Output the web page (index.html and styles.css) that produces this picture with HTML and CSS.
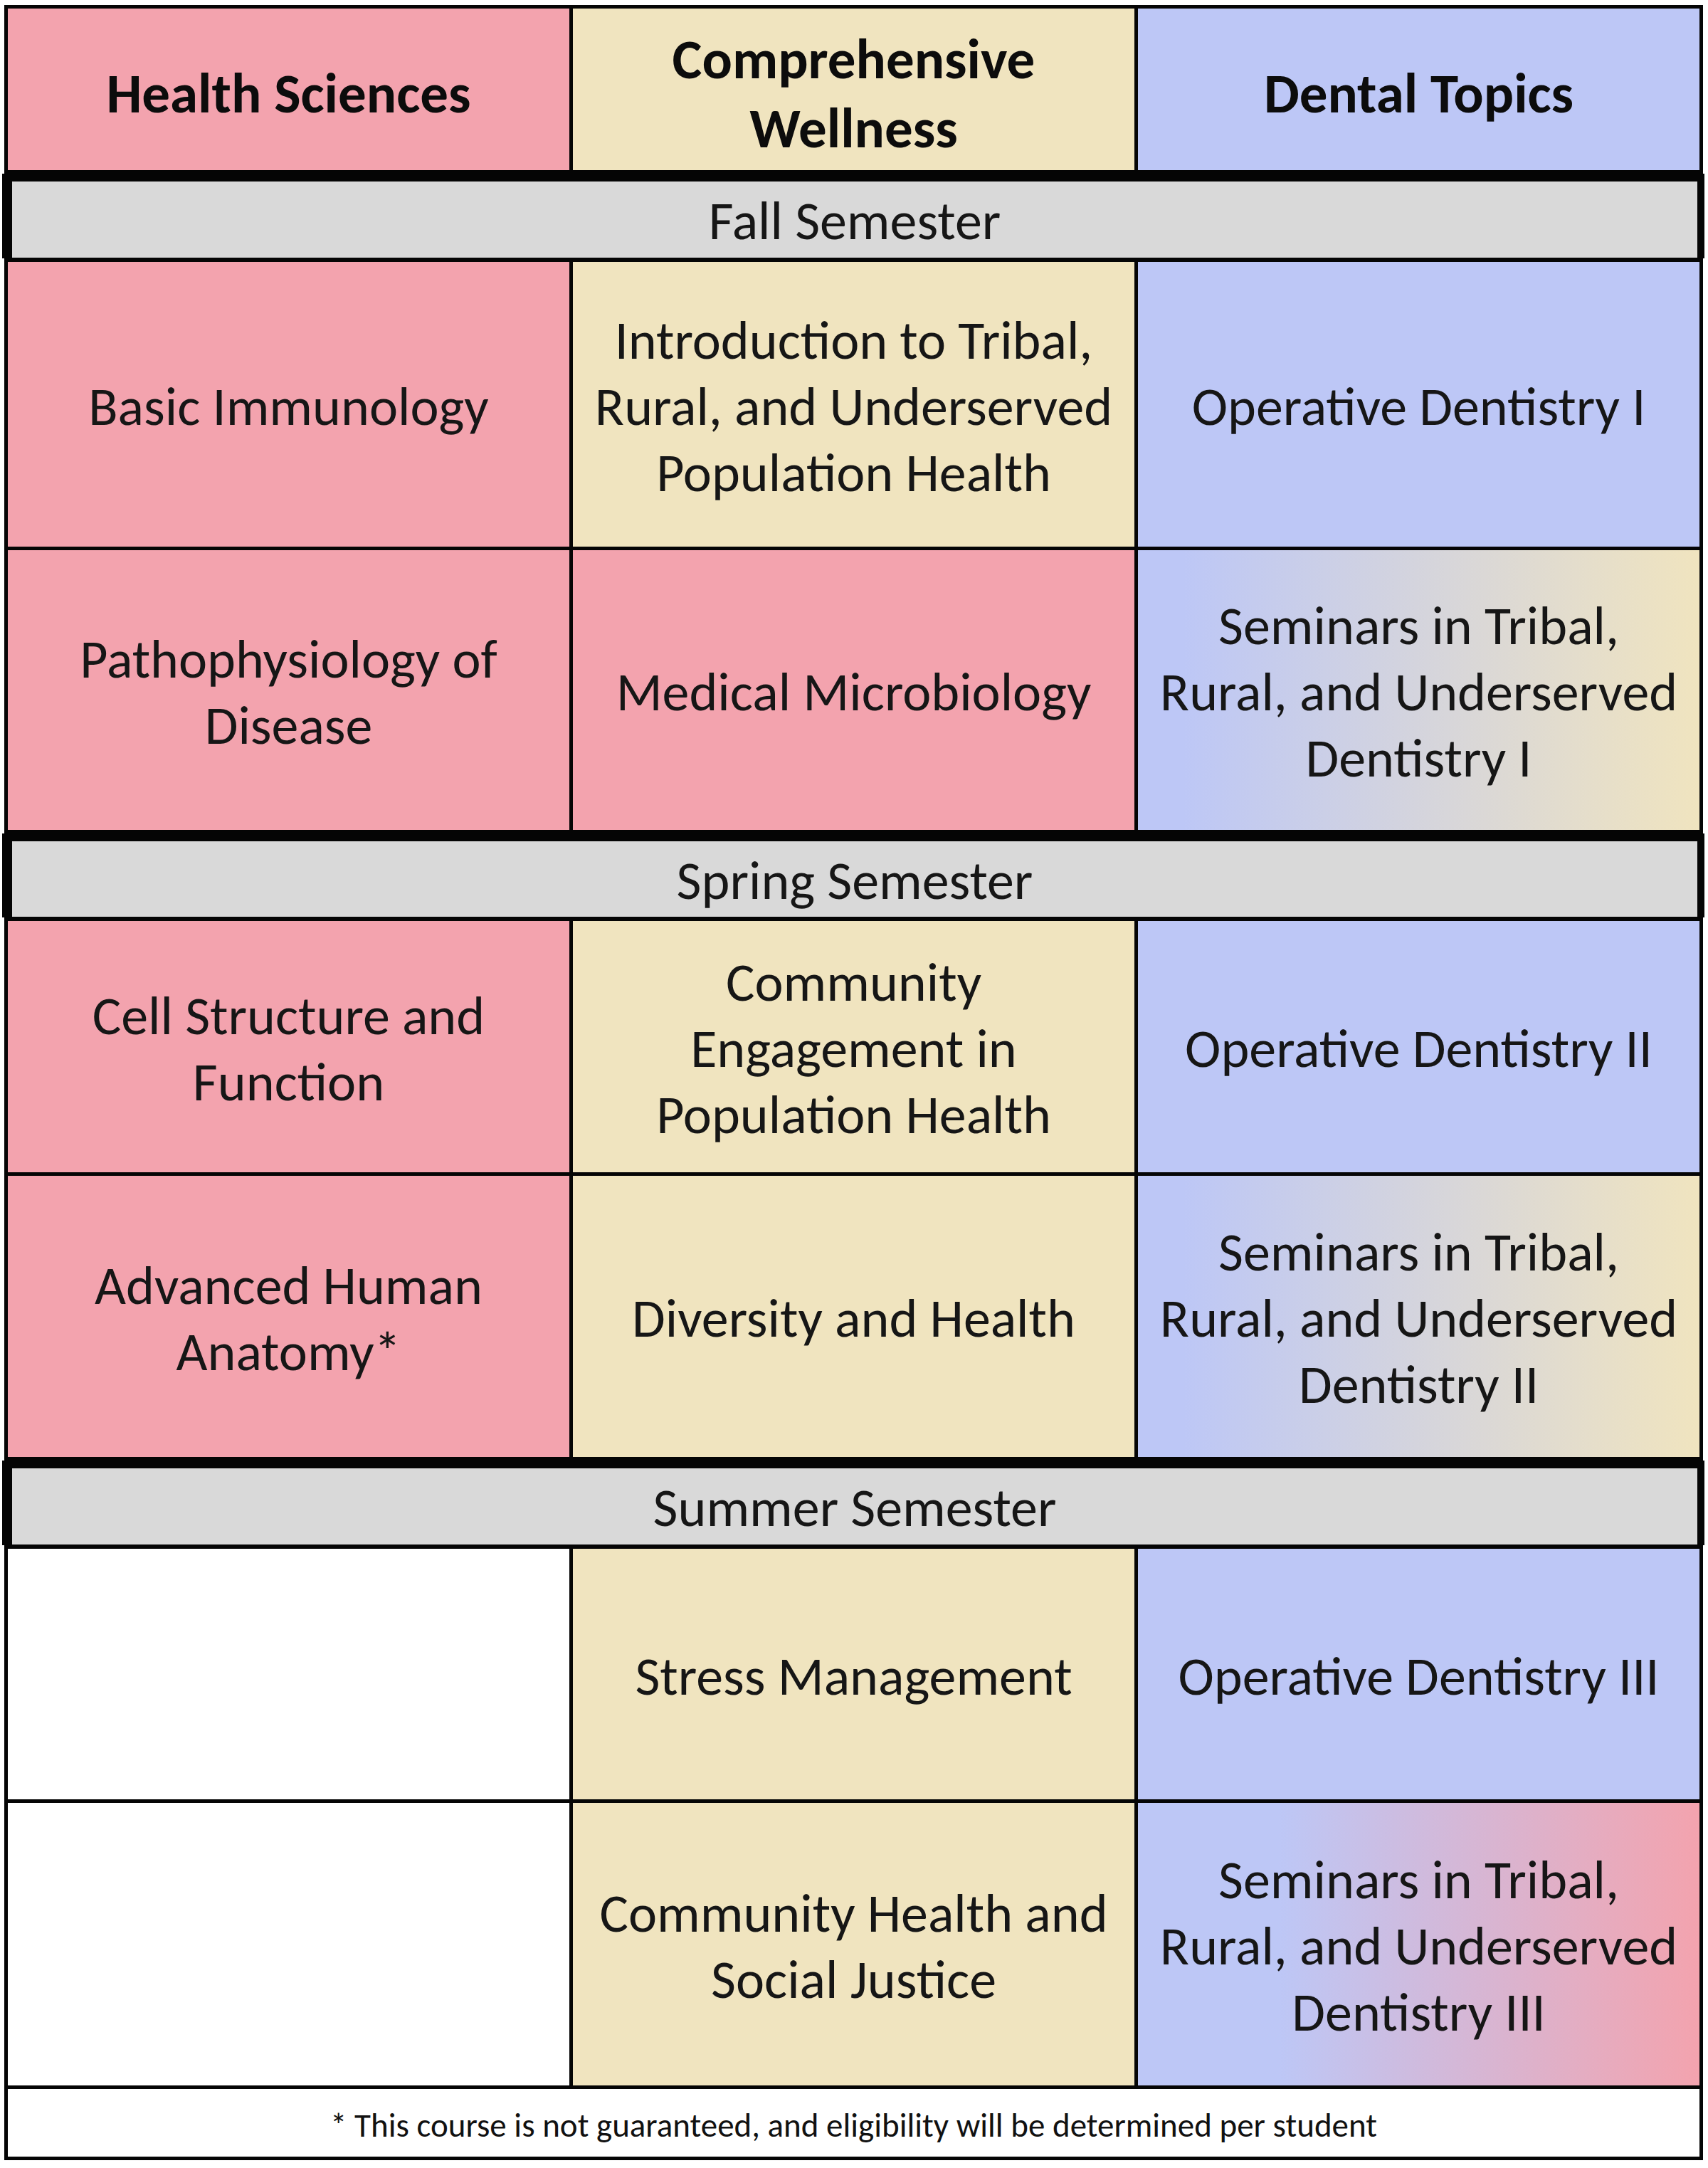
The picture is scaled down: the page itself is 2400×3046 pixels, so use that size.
FILE: index.html
```html
<!DOCTYPE html>
<html lang="en">
<head>
<meta charset="utf-8">
<title>Course Schedule</title>
<link rel="stylesheet" href="styles.css">
</head>
<body>
<div class="schedule">
  <div class="cell head pink">Health Sciences</div>
  <div class="cell head beige">Comprehensive<br>Wellness</div>
  <div class="cell head blue">Dental Topics</div>

  <div class="semester sem-fall">Fall Semester</div>

  <div class="cell r1 pink">Basic Immunology</div>
  <div class="cell r1 beige">Introduction to Tribal,<br>Rural, and Underserved<br>Population Health</div>
  <div class="cell r1 blue">Operative Dentistry I</div>

  <div class="cell r2 pink">Pathophysiology of<br>Disease</div>
  <div class="cell r2 pink">Medical Microbiology</div>
  <div class="cell r2 blue-beige">Seminars in Tribal,<br>Rural, and Underserved<br>Dentistry I</div>

  <div class="semester sem-spring">Spring Semester</div>

  <div class="cell r3 pink">Cell Structure and<br>Function</div>
  <div class="cell r3 beige">Community<br>Engagement in<br>Population Health</div>
  <div class="cell r3 blue">Operative Dentistry II</div>

  <div class="cell r4 pink">Advanced Human<br>Anatomy*</div>
  <div class="cell r4 beige">Diversity and Health</div>
  <div class="cell r4 blue-beige">Seminars in Tribal,<br>Rural, and Underserved<br>Dentistry II</div>

  <div class="semester sem-summer">Summer Semester</div>

  <div class="cell r5 white"></div>
  <div class="cell r5 beige">Stress Management</div>
  <div class="cell r5 blue">Operative Dentistry III</div>

  <div class="cell r6 white"></div>
  <div class="cell r6 beige">Community Health and<br>Social Justice</div>
  <div class="cell r6 blue-pink">Seminars in Tribal,<br>Rural, and Underserved<br>Dentistry III</div>

  <div class="footnote">* This course is not guaranteed, and eligibility will be determined per student</div>
</div>
</body>
</html>
```

FILE: styles.css
```css
html, body {
  margin: 0;
  padding: 0;
  background: #ffffff;
}

body {
  font-family: Carlito, Lato, "Liberation Sans", sans-serif;
  color: #161616;
}

.schedule {
  margin: 7px 0 0 6px;
  width: 2387px;
  box-sizing: border-box;
  padding: 5px;
  background: #050505;
  display: grid;
  grid-template-columns: repeat(3, 1fr);
  grid-template-rows: 227px 119px 400px 393px 118px 353px 395px 119px 352px 397px 95px;
  gap: 5px;
}

.cell {
  display: flex;
  align-items: center;
  justify-content: center;
  text-align: center;
  box-sizing: border-box;
  padding-top: 6px;
  font-size: 76px;
  line-height: 93px;
  white-space: nowrap;
  overflow: visible;
}

.head {
  font-weight: 700;
  font-size: 79px;
  line-height: 97px;
  padding-top: 12px;
  color: #0c0c0c;
}

.pink { background: #f3a3ae; }
.beige { background: #f0e4bf; }
.blue { background: #bdc7f6; }
.white { background: #ffffff; }

.blue-beige {
  background: linear-gradient(to right, #bdc7f6 8%, #f0e4bf 100%);
}

.blue-pink {
  background: linear-gradient(to right, #bdc7f6 25%, #f3a3ae 100%);
}

.semester {
  grid-column: 1 / -1;
  margin: 0 -7px 0 -8px;
  background: #d9d9d9;
  border-style: solid;
  border-color: #050505;
  border-width: 11px 10px 1px 14px;
  padding-top: 4px;
  display: flex;
  align-items: center;
  justify-content: center;
  font-size: 76px;
  line-height: 93px;
}

.footnote {
  grid-column: 1 / -1;
  background: #ffffff;
  display: flex;
  align-items: center;
  justify-content: center;
  padding-top: 6px;
  font-size: 47px;
  color: #111111;
}
```
